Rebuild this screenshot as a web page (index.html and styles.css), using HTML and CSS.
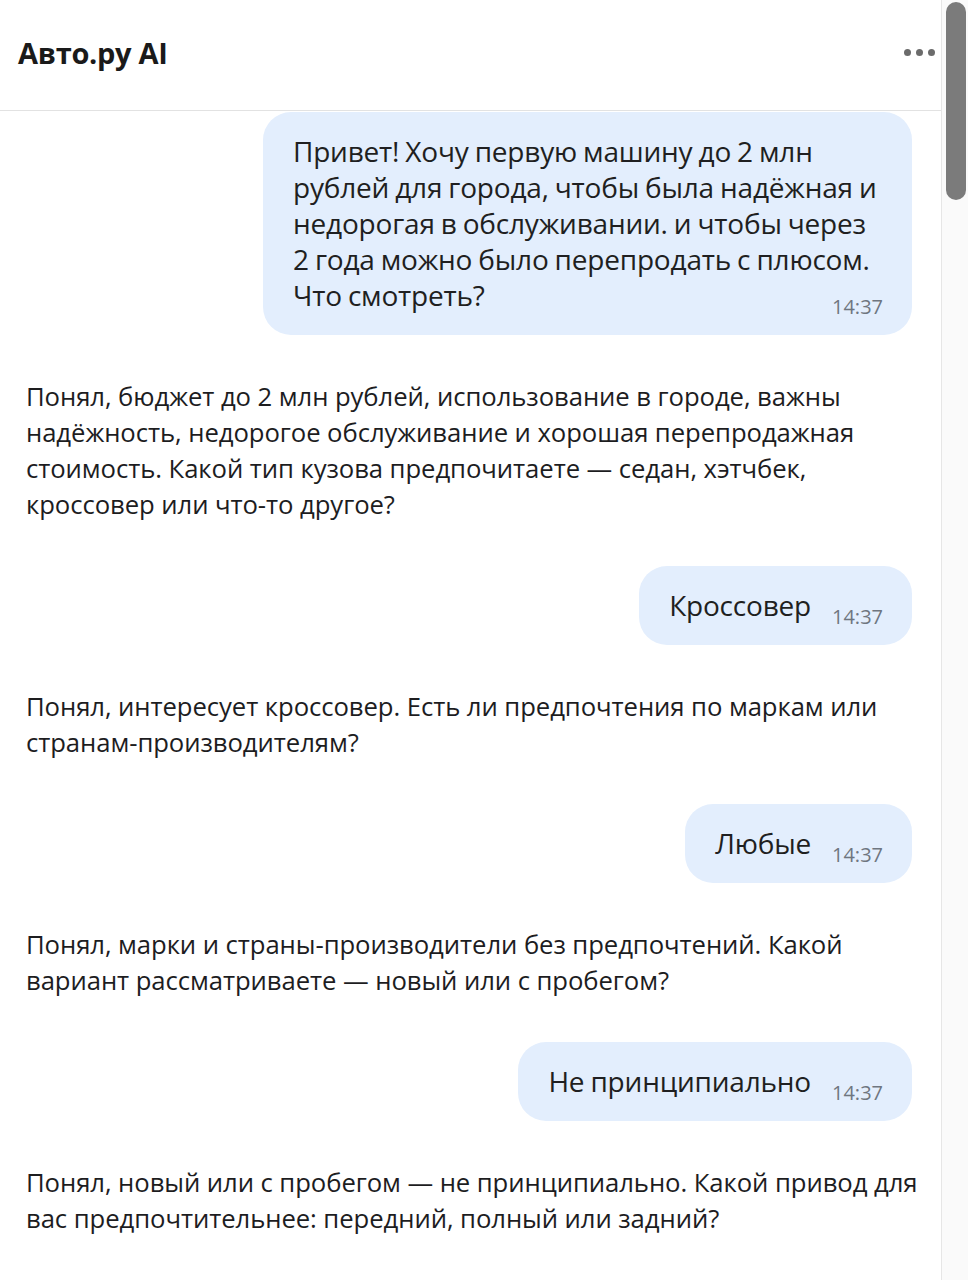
FILE: index.html
```html
<!DOCTYPE html>
<html lang="ru">
<head>
<meta charset="utf-8">
<title>Авто.ру AI</title>
<link rel="stylesheet" href="styles.css">
</head>
<body>
<div class="page">
  <div class="app">
    <header class="header">
      <h1 class="title">Авто.ру AI</h1>
      <button class="more" aria-label="Меню">
        <span class="dot"></span><span class="dot"></span><span class="dot"></span>
      </button>
    </header>
    <main class="messages">
      <div class="bubble">Привет! Хочу первую машину до 2 млн рублей для города, чтобы была надёжная и недорогая в обслуживании. и чтобы через 2&nbsp;года можно было перепродать с плюсом. Что смотреть?<span class="time">14:37</span></div>
      <p class="answer">Понял, бюджет до 2 млн рублей, использование в городе, важны надёжность, недорогое обслуживание и хорошая перепродажная стоимость. Какой тип кузова предпочитаете — седан, хэтчбек, кроссовер или что-то другое?</p>
      <div class="bubble">Кроссовер<span class="time">14:37</span></div>
      <p class="answer">Понял, интересует кроссовер. Есть ли предпочтения по маркам или странам-производителям?</p>
      <div class="bubble">Любые<span class="time">14:37</span></div>
      <p class="answer">Понял, марки и страны-производители без предпочтений. Какой вариант рассматриваете — новый или с пробегом?</p>
      <div class="bubble">Не принципиально<span class="time">14:37</span></div>
      <p class="answer">Понял, новый или с пробегом — не принципиально. Какой привод для вас предпочтительнее: передний, полный или задний?</p>
    </main>
  </div>
  <div class="scrollbar"><div class="thumb"></div></div>
</div>
</body>
</html>
```
FILE: styles.css
```css
* { box-sizing: border-box; }
html, body { margin: 0; padding: 0; background: #ffffff; }
body {
  font-family: "Open Sans", "Noto Sans", sans-serif;
  color: #1d1d1f;
  overflow: hidden;
}
.page {
  display: flex;
  width: 968px;
  height: 1280px;
}
.app {
  width: 941px;
  display: flex;
  flex-direction: column;
}
.header {
  height: 111px;
  flex: none;
  display: flex;
  align-items: center;
  justify-content: space-between;
  padding: 0 6px 6px 18px;
  border-bottom: 1px solid #e2e2e2;
}
.title {
  margin: 0;
  font-size: 29px;
  font-weight: 700;
  letter-spacing: -0.3px;
  color: #1a1a1a;
}
.more {
  display: flex;
  gap: 5px;
  padding: 0;
  border: 0;
  background: none;
}
.dot {
  width: 7px;
  height: 7px;
  border-radius: 50%;
  background: #6b6b6b;
}
.messages {
  display: flex;
  flex-direction: column;
  gap: 43.5px;
  padding: 1px 29px 0 26px;
}
.bubble {
  align-self: flex-end;
  max-width: 649px;
  display: flow-root;
  padding: 21px 29px 16px 30px;
  background: #e3eefd;
  border-radius: 28px;
  font-size: 28px;
  line-height: 36px;
  letter-spacing: -0.2px;
  word-spacing: -1px;
  color: #1f1f21;
}
.time {
  float: right;
  margin: 18px 0 0 21px;
  font-size: 20px;
  line-height: 24px;
  letter-spacing: 0;
  word-spacing: 0;
  color: #6f7680;
}
.answer {
  margin: 0 -6px 0 0;
  font-size: 25.7px;
  line-height: 36px;
  letter-spacing: -0.08px;
}
.scrollbar {
  width: 27px;
  flex: none;
  border-left: 1px solid #e6e6e6;
  background: #fafafa;
  padding: 2px 0 0 4px;
}
.thumb {
  width: 20px;
  height: 198px;
  border-radius: 10px;
  background: #7b7b7b;
}
```
